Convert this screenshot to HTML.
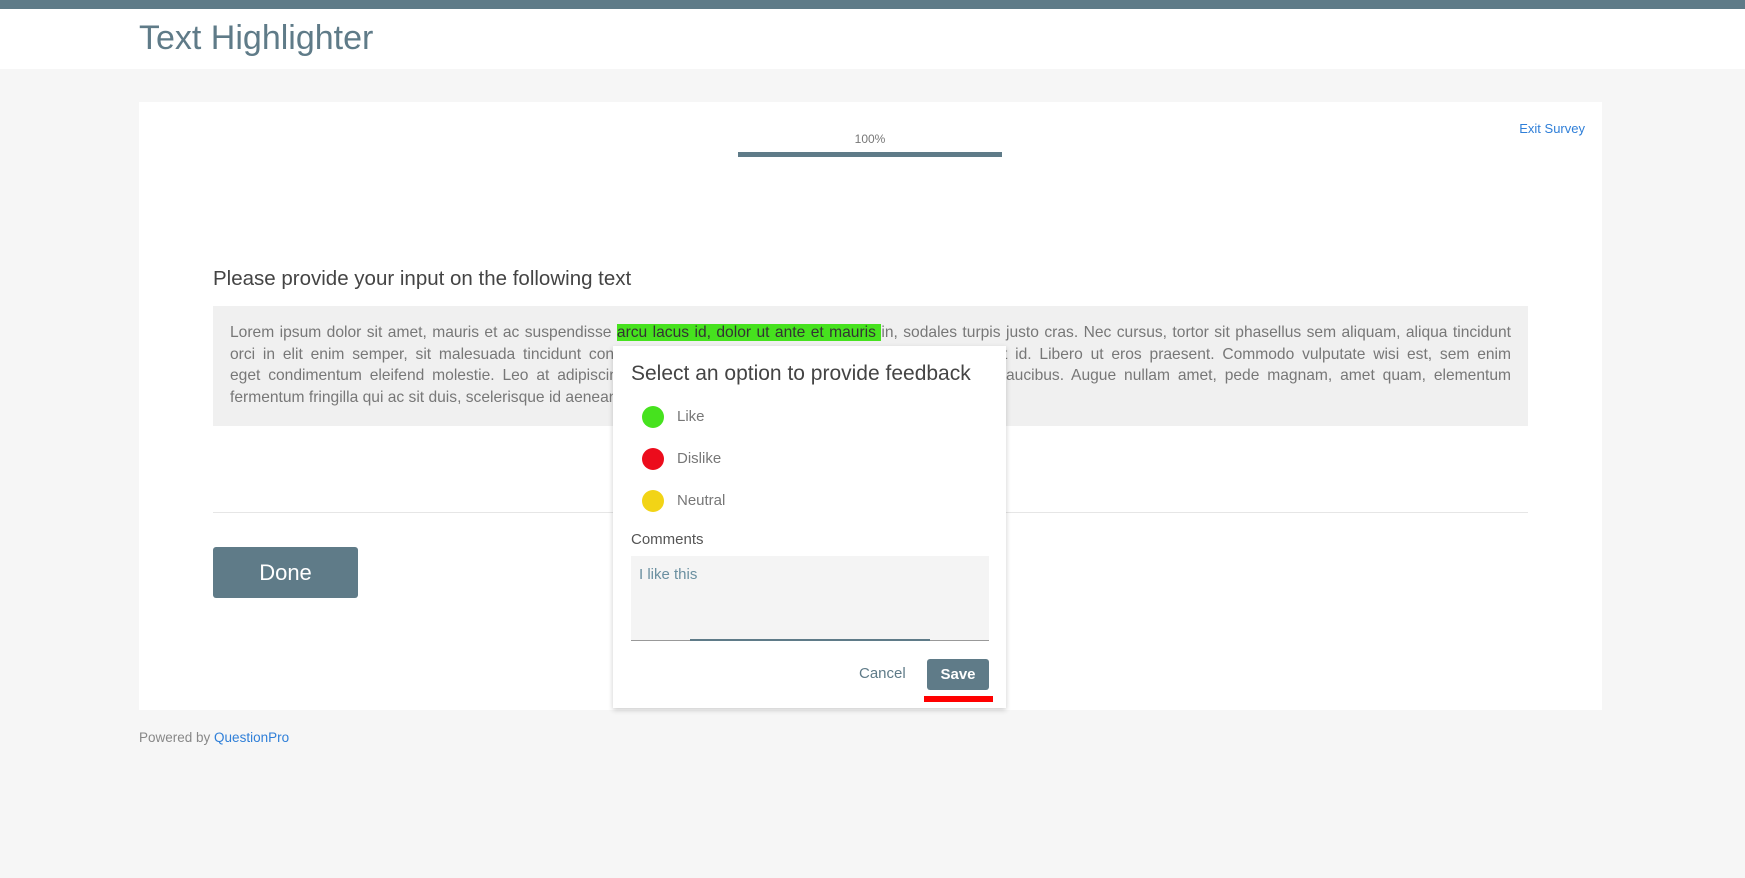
<!DOCTYPE html>
<html><head><meta charset="utf-8"><style>
*{box-sizing:border-box;margin:0;padding:0}
body{width:1745px;height:878px;background:#f6f6f6;font-family:"Liberation Sans",sans-serif;position:relative;overflow:hidden;color:#555}
.abs{position:absolute}
.ln{text-align:justify;text-align-last:justify;height:21.5px}
</style></head><body>
<div class="abs" style="left:0;top:0;width:1745px;height:9px;background:#5f7b88"></div>
<div class="abs" style="left:0;top:9px;width:1745px;height:60px;background:#fff"></div>
<div class="abs" style="left:139px;top:19px;font-size:34px;color:#5f7b88">Text Highlighter</div>
<div class="abs" style="left:139px;top:102px;width:1463px;height:608px;background:#fff"></div>
<div class="abs" style="left:738px;top:132px;width:264px;text-align:center;font-size:12px;color:#777">100%</div>
<div class="abs" style="left:738px;top:152px;width:264px;height:5px;background:#5f7b88"></div>
<div class="abs" style="left:1480px;top:121px;width:105px;text-align:right;font-size:13px;color:#2f7fd8">Exit Survey</div>
<div class="abs" style="left:213px;top:267px;font-size:20.5px;color:#444">Please provide your input on the following text</div>
<div class="abs" style="left:213px;top:306px;width:1315px;height:120px;background:#f0f0f0"></div>
<div class="abs" style="left:230px;top:322px;width:1281px;font-size:15.6px;line-height:21.5px;color:#777">
<div class="ln">Lorem ipsum dolor sit amet, mauris et ac suspendisse <span style="background:#46e21e;color:#333">arcu lacus id, dolor ut ante et mauris </span>in, sodales turpis justo cras. Nec cursus, tortor sit phasellus sem aliquam, aliqua tincidunt</div>
<div class="ln">orci in elit enim semper, sit malesuada tincidunt consectetuer wisi, wisi sed lacus ac orci orci. Vitae amet id. Libero ut eros praesent. Commodo vulputate wisi est, sem enim</div>
<div class="ln">eget condimentum eleifend molestie. Leo at adipiscing nulla sapien dolor, ut aliquet neque massa lorem faucibus. Augue nullam amet, pede magnam, amet quam, elementum</div>
<div>fermentum fringilla qui ac sit duis, scelerisque id aenean.</div>
</div>
<div class="abs" style="left:213px;top:512px;width:1315px;height:1px;background:#e6e6e6"></div>
<div class="abs" style="left:213px;top:547px;width:145px;height:51px;background:#5f7b88;border-radius:3px;color:#fff;font-size:22px;text-align:center;line-height:51px">Done</div>
<div class="abs" style="left:139px;top:730px;font-size:13.5px;color:#888">Powered by <span style="color:#2f7fd8">QuestionPro</span></div>
<div class="abs" style="left:613px;top:346px;width:393px;height:362px;background:#fff;box-shadow:0 2px 5px rgba(0,0,0,.2)"></div>
<div class="abs" style="left:631px;top:362px;font-size:21px;color:#444">Select an option to provide feedback</div>
<div class="abs" style="left:642px;top:406px;width:22px;height:22px;border-radius:50%;background:#46e21e"></div>
<div class="abs" style="left:677px;top:408px;font-size:15px;color:#777">Like</div>
<div class="abs" style="left:642px;top:448px;width:22px;height:22px;border-radius:50%;background:#ec0c1c"></div>
<div class="abs" style="left:677px;top:450px;font-size:15px;color:#777">Dislike</div>
<div class="abs" style="left:642px;top:490px;width:22px;height:22px;border-radius:50%;background:#f2d416"></div>
<div class="abs" style="left:677px;top:492px;font-size:15px;color:#777">Neutral</div>
<div class="abs" style="left:631px;top:531px;font-size:15px;color:#555">Comments</div>
<div class="abs" style="left:631px;top:556px;width:358px;height:85px;background:#f4f4f4;border-bottom:1px solid #999"></div>
<div class="abs" style="left:690px;top:639px;width:240px;height:2px;background:#5f7b88"></div>
<div class="abs" style="left:639px;top:566px;font-size:15px;color:#6a8fa0">I like this</div>
<div class="abs" style="left:859px;top:665px;font-size:15px;color:#5f7b88">Cancel</div>
<div class="abs" style="left:927px;top:659px;width:62px;height:31px;background:#5f7b88;border-radius:3px;color:#fff;font-size:15px;font-weight:bold;text-align:center;line-height:31px">Save</div>
<div class="abs" style="left:924px;top:696px;width:69px;height:6px;background:#f00"></div>
</body></html>
